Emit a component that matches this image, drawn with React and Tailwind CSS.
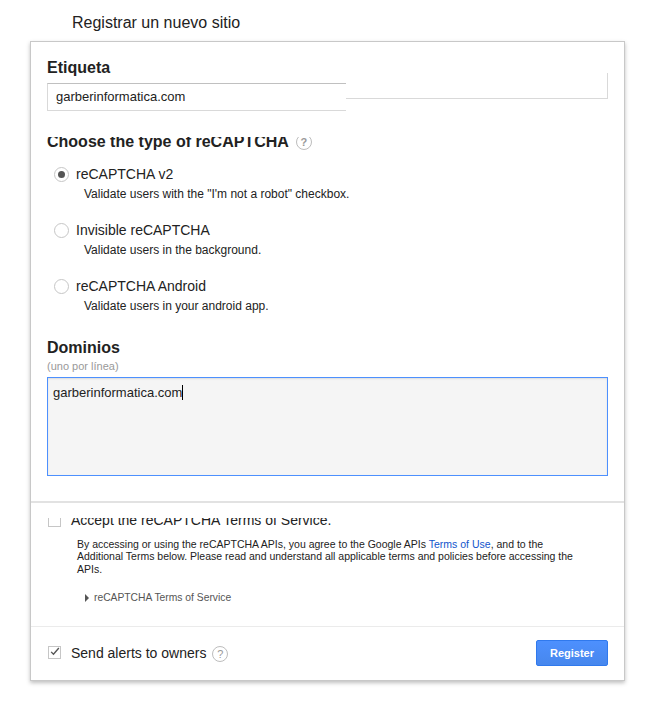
import React from 'react';

const HelpIcon = () => (
  <span className="inline-flex h-[16px] w-[16px] items-center justify-center rounded-full border border-[#bdbdbd] text-[11px] leading-none text-[#999]">
    ?
  </span>
);

const Radio = ({ checked }) => (
  <span className="flex h-[15px] w-[15px] items-center justify-center rounded-full border border-[#c6c6c6] bg-white">
    {checked && <span className="h-[7px] w-[7px] rounded-full bg-[#555]" />}
  </span>
);

const options = [
  { label: 'reCAPTCHA v2', desc: 'Validate users with the "I\'m not a robot" checkbox.', checked: true },
  { label: 'Invisible reCAPTCHA', desc: 'Validate users in the background.' },
  { label: 'reCAPTCHA Android', desc: 'Validate users in your android app.' },
];

export default function App() {
  return (
    <div className="min-h-[710px] bg-white font-['Liberation_Sans',Arial,sans-serif] text-[#222]">
      <div className="pl-[72px] pt-[14px] pb-[9px] text-[16px] leading-[18px]">Registrar un nuevo sitio</div>

      <div className="ml-[30px] w-[595px] border border-[#c8c8c8] bg-white shadow-[0_2px_4px_rgba(0,0,0,0.25)]">
        {/* top section */}
        <div className="px-[16px] pb-[25px]">
          <div className="pt-[16px] text-[16px] font-bold leading-[20px]">Etiqueta</div>
          <div className="-mt-[5px] flex items-start">
            <div className="mt-[10px] flex h-[28px] w-[299px] items-center border-y border-l border-t-[#c0c0c0] border-b-[#d9d9d9] border-l-[#d9d9d9] pl-[8px] text-[13px]">
              garberinformatica.com
            </div>
            <div className="h-[26px] flex-1 border-r border-b border-[#d9d9d9]" />
          </div>

          <div className="mt-[26px] h-[16px] overflow-hidden">
            <div className="-mt-[5px] flex items-center gap-[7px] text-[16px] font-bold leading-[20px]">
              <span>Choose the type of reCAPTCHA</span>
              <HelpIcon />
            </div>
          </div>

          <div className="mt-[12px] flex flex-col gap-[19px]">
            {options.map((o) => (
              <div key={o.label}>
                <div className="flex h-[18px] items-center pl-[7px]">
                  <Radio checked={o.checked} />
                  <span className="ml-[7px] text-[14px]">{o.label}</span>
                </div>
                <div className="mt-[3px] pl-[37px] text-[12px] leading-[16px]">{o.desc}</div>
              </div>
            ))}
          </div>

          <div className="mt-[24px] text-[16px] font-bold leading-[20px]">Dominios</div>
          <div className="mt-[1px] text-[11px] leading-[14px] text-[#999]">(uno por línea)</div>
          <div className="mt-[4px] h-[99px] border border-[#4d90fe] bg-[#f5f5f5] pl-[5px] pt-[2px] shadow-[inset_0_1px_2px_rgba(0,0,0,0.1)]">
            <span className="border-r border-black text-[13px] leading-[16px]">garberinformatica.com</span>
          </div>
        </div>

        {/* terms section */}
        <div className="border-t-2 border-[#e2e2e2] px-[16px] pb-[21px]">
          <div className="mt-[15px] h-[10px] overflow-hidden">
            <div className="-mt-[6px] flex h-[16px] items-center">
              <span className="ml-[1px] h-[13px] w-[13px] border border-[#c6c6c6] bg-white" />
              <span className="ml-[10px] text-[14px] leading-[16px]">Accept the reCAPTCHA Terms of Service.</span>
            </div>
          </div>
          <p className="mt-[10px] w-[532px] pl-[30px] text-[10.5px] leading-[12.3px] text-[#222]">
            By accessing or using the reCAPTCHA APIs, you agree to the Google APIs{' '}
            <a className="text-[#1155cc]">Terms of Use</a>, and to the Additional Terms below. Please read and
            understand all applicable terms and policies before accessing the APIs.
          </p>
          <div className="mt-[16px] flex h-[14px] items-center pl-[38px] text-[10.3px] text-[#555]">
            <span className="h-0 w-0 border-y-[4px] border-l-[4px] border-y-transparent border-l-[#555]" />
            <span className="ml-[5px]">reCAPTCHA Terms of Service</span>
          </div>
        </div>

        {/* footer */}
        <div className="flex items-center justify-between border-t border-[#ebebeb] px-[16px] pt-[13px] pb-[14px]">
          <div className="flex items-center">
            <span className="ml-[1px] flex h-[13px] w-[13px] items-center justify-center border border-[#c6c6c6] bg-white">
              <svg width="13" height="11" viewBox="0 0 13 11" className="-mt-[2px] ml-[1px]">
                <path d="M1.5 6 L4.5 9 L11.5 1" fill="none" stroke="#555" strokeWidth="1.8" />
              </svg>
            </span>
            <span className="ml-[10px] text-[14px] leading-[16px]">Send alerts to owners</span>
            <span className="ml-[6px]">
              <HelpIcon />
            </span>
          </div>
          <button className="h-[26px] w-[72px] rounded-[2px] border border-[#3079ed] bg-gradient-to-b from-[#4d90fe] to-[#4787ed] text-[11px] font-bold text-white">
            Register
          </button>
        </div>
      </div>
    </div>
  );
}
